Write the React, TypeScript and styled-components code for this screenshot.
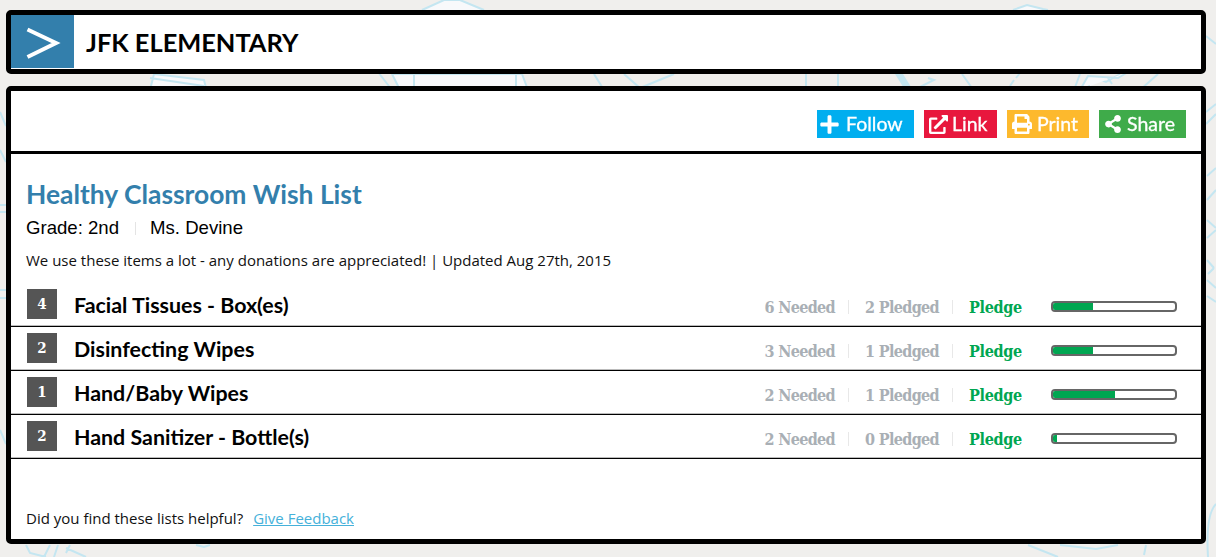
import React from "react";
import styled, { createGlobalStyle } from "styled-components";
import { FaExternalLinkAlt, FaPlus, FaPrint, FaShareAlt } from "react-icons/fa";

const items = [
  { qty: 4, name: "Facial Tissues - Box(es)", needed: 6, pledged: 2, pct: 33 },
  { qty: 2, name: "Disinfecting Wipes", needed: 3, pledged: 1, pct: 33 },
  { qty: 1, name: "Hand/Baby Wipes", needed: 2, pledged: 1, pct: 51 },
  { qty: 2, name: "Hand Sanitizer - Bottle(s)", needed: 2, pledged: 0, pct: 3 },
];

const Doodles = () => (
  <DoodleLayer viewBox="0 0 1216 557" fill="#f8f9fb" stroke="#c4e6f1" strokeWidth="2">
    <path d="M150 90l4-16 50 6 3 12zM150 78l54 8" />
    <path d="M378 72l14 18M392 74h130l6 16H400zM414 74v16M516 74v16" />
    <path d="M594 74l10 16" fill="none" />
    <path d="M624 74l16 14 34-14M640 88l-16 2" fill="none" />
    <path d="M806 74v16M838 74v16" fill="none" />
    <path d="M895 74h8l10 16h-8z" fill="#c4e6f1" stroke="none" />
    <path d="M918 88l16-8-6-2M962 74l10 14" fill="none" />
    <path d="M1016 78l4-5M1080 74l-6 16M1096 78l10 4 14-8" fill="none" />
    <path d="M1140 90l18-16" fill="none" />
    <path d="M422 10l22-10h16l24 10" />
    <path d="M1013 10l14-5 16 4 5 1M1014 80l-4 6M1090 86l-10 4 8-14 30 2 10-6M1108 78l4 6" />
    <path d="M1206 36l10 8M1206 112l10-8M1206 124l10-10" fill="none" />
    <path d="M1207 176l9-8M1207 200l9-10M1207 220l9 8M1207 238l9-8M1207 260l7 8M1214 268l-6 6M1207 280l9 8M1207 296l9 6" fill="none" />
    <path d="M1216 504c-6 6-10 20-8 53" fill="none" />
    <path d="M26 545l4 8 16 4M50 545l-6 12M58 545l-4 12M66 548l20 9M70 545l-4 8" fill="none" />
    <path d="M196 545l8 2 6-2M1028 545l30 12M1060 545l36 4 22-4M1146 545l-2 10" fill="none" />
    <path d="M0 112l6 14M0 150l6 12M0 205h6M0 212h6M0 290h6M0 298h6M0 430l6 14" fill="none" />
  </DoodleLayer>
);

export default function App() {
  return (
    <>
      <GlobalStyle />
      <Doodles />
      <Page>
        <HeaderCard>
          <Logo>
            <svg width="63" height="53" viewBox="0 0 63 53">
              <path d="M16.5 14.5l28.5 13.5-28.5 14" fill="none" stroke="#fff" strokeWidth="4" />
            </svg>
          </Logo>
          <School>JFK ELEMENTARY</School>
        </HeaderCard>

        <MainCard>
          <Toolbar>
            <ActionButton $bg="#00aeef" $w={97} $pad={2} $gap={6}>
              <FaPlus size={21} />
              Follow
            </ActionButton>
            <ActionButton $bg="#e8173d" $w={73} $pad={5} $gap={4}>
              <FaExternalLinkAlt size={19} />
              Link
            </ActionButton>
            <ActionButton $bg="#fdb92d" $w={82} $pad={5} $gap={5}>
              <FaPrint size={20} />
              Print
            </ActionButton>
            <ActionButton $bg="#3fab4a" $w={87} $pad={5} $gap={5}>
              <FaShareAlt size={18} />
              Share
            </ActionButton>
          </Toolbar>

          <Intro>
            <Title>Healthy Classroom Wish List</Title>
            <Meta>
              <span>Grade: 2nd</span>
              <MetaSep />
              <span>Ms. Devine</span>
            </Meta>
            <Note>We use these items a lot - any donations are appreciated! | Updated Aug 27th, 2015</Note>
          </Intro>

          <List>
            {items.map((item) => (
              <Row key={item.name}>
                <Badge>{item.qty}</Badge>
                <ItemName>{item.name}</ItemName>
                <Stat>{item.needed} Needed</Stat>
                <Stat>{item.pledged} Pledged</Stat>
                <PledgeLink>Pledge</PledgeLink>
                <Bar>
                  <BarFill style={{ width: `${item.pct}%` }} />
                </Bar>
              </Row>
            ))}
          </List>

          <Footer>
            Did you find these lists helpful?
            <FeedbackLink href="#">Give Feedback</FeedbackLink>
          </Footer>
        </MainCard>
      </Page>
    </>
  );
}

const GlobalStyle = createGlobalStyle`
  html, body {
    margin: 0;
    height: 557px;
    overflow: hidden;
    background: #f0efed;
  }
  * {
    box-sizing: border-box;
  }
`;

const DoodleLayer = styled.svg`
  position: absolute;
  top: 0;
  left: 0;
  width: 1216px;
  height: 557px;
`;

const Page = styled.div`
  position: relative;
  width: 1216px;
  height: 557px;
  padding: 10px 10px 0 6px;
  display: flex;
  flex-direction: column;
  gap: 12px;
`;

const HeaderCard = styled.header`
  height: 64px;
  background: #fff;
  border: 5px solid #000;
  border-radius: 5px;
  display: flex;
  align-items: flex-start;
`;

const Logo = styled.div`
  width: 63px;
  height: 53px;
  background: #337fac;
  flex: none;
`;

const School = styled.h1`
  margin: 0 0 0 12px;
  font: 700 25.4px/54px Lato, sans-serif;
  color: #000;
`;

const MainCard = styled.main`
  height: 458px;
  background: #fff;
  border: 5px solid #000;
  border-radius: 5px;
  display: flex;
  flex-direction: column;
`;

const Toolbar = styled.div`
  height: 63px;
  flex: none;
  border-bottom: 3px solid #000;
  padding: 19px 15px 0 0;
  display: flex;
  justify-content: flex-end;
  gap: 10px;
`;

const ActionButton = styled.a<{ $bg: string; $w: number; $pad: number; $gap: number }>`
  width: ${(p) => p.$w}px;
  height: 28px;
  background: ${(p) => p.$bg};
  color: #fff;
  font: 400 19.5px/28px Lato, sans-serif;
  -webkit-text-stroke: 0.3px #fff;
  display: flex;
  align-items: center;
  gap: ${(p) => p.$gap}px;
  padding-left: ${(p) => p.$pad}px;
  filter: blur(0.35px);
`;

const Intro = styled.div`
  padding: 24px 15px 0;
`;

const Title = styled.h2`
  margin: 0;
  font: 700 26.4px/32px Lato, sans-serif;
  color: #337fac;
`;

const Meta = styled.div`
  margin-top: 5px;
  height: 26px;
  display: flex;
  align-items: center;
  font: 400 18.6px/26px "Liberation Sans", Arial, sans-serif;
  color: #000;
`;

const MetaSep = styled.i`
  width: 1px;
  height: 13px;
  margin: 0 14px 0 16px;
  background: #e4e4e4;
`;

const Note = styled.p`
  margin: 8px 0 0;
  font: 400 15px/22px "Open Sans", sans-serif;
  color: #111;
`;

const List = styled.div`
  margin-top: 12px;
`;

const Row = styled.div`
  height: 44px;
  padding: 6px 24px 0 16px;
  border-bottom: 1px solid #000;
  box-shadow: inset 0 -1px 0 #bbb;
  display: flex;
  align-items: flex-start;
`;

const Badge = styled.span`
  width: 30px;
  height: 30px;
  flex: none;
  background: #555;
  color: #fff;
  font: 700 15px/30px "DejaVu Serif Condensed", "DejaVu Serif", serif;
  text-align: center;
`;

const ItemName = styled.div`
  margin-left: 17px;
  margin-right: auto;
  font: 700 21.4px/32px Lato, sans-serif;
  color: #000;
`;

const Stat = styled.span`
  font: 700 16px/38px "DejaVu Serif Condensed", "DejaVu Serif", serif;
  letter-spacing: -0.65px;
  color: #a9afb5;
  padding-right: 14px;
  margin-right: 16px;
  position: relative;

  &::after {
    content: "";
    position: absolute;
    right: 0;
    top: 11px;
    width: 1px;
    height: 14px;
    background: #e8e8e8;
  }
`;

const PledgeLink = styled.a`
  width: 53px;
  font: 700 16px/38px "DejaVu Serif Condensed", "DejaVu Serif", serif;
  letter-spacing: -0.3px;
  color: #00a651;
`;

const Bar = styled.div`
  width: 126px;
  height: 11px;
  margin: 12px 0 0 29px;
  border: 2px solid #666;
  border-radius: 4px;
  background: #fff;
  overflow: hidden;
`;

const BarFill = styled.div`
  height: 100%;
  background: #00a651;
`;

const Footer = styled.div`
  margin-top: auto;
  padding: 0 15px 10px;
  font: 400 15px/22px "Open Sans", sans-serif;
  color: #111;
`;

const FeedbackLink = styled.a`
  margin-left: 10px;
  color: #45b1da;
  text-decoration: underline;
`;
